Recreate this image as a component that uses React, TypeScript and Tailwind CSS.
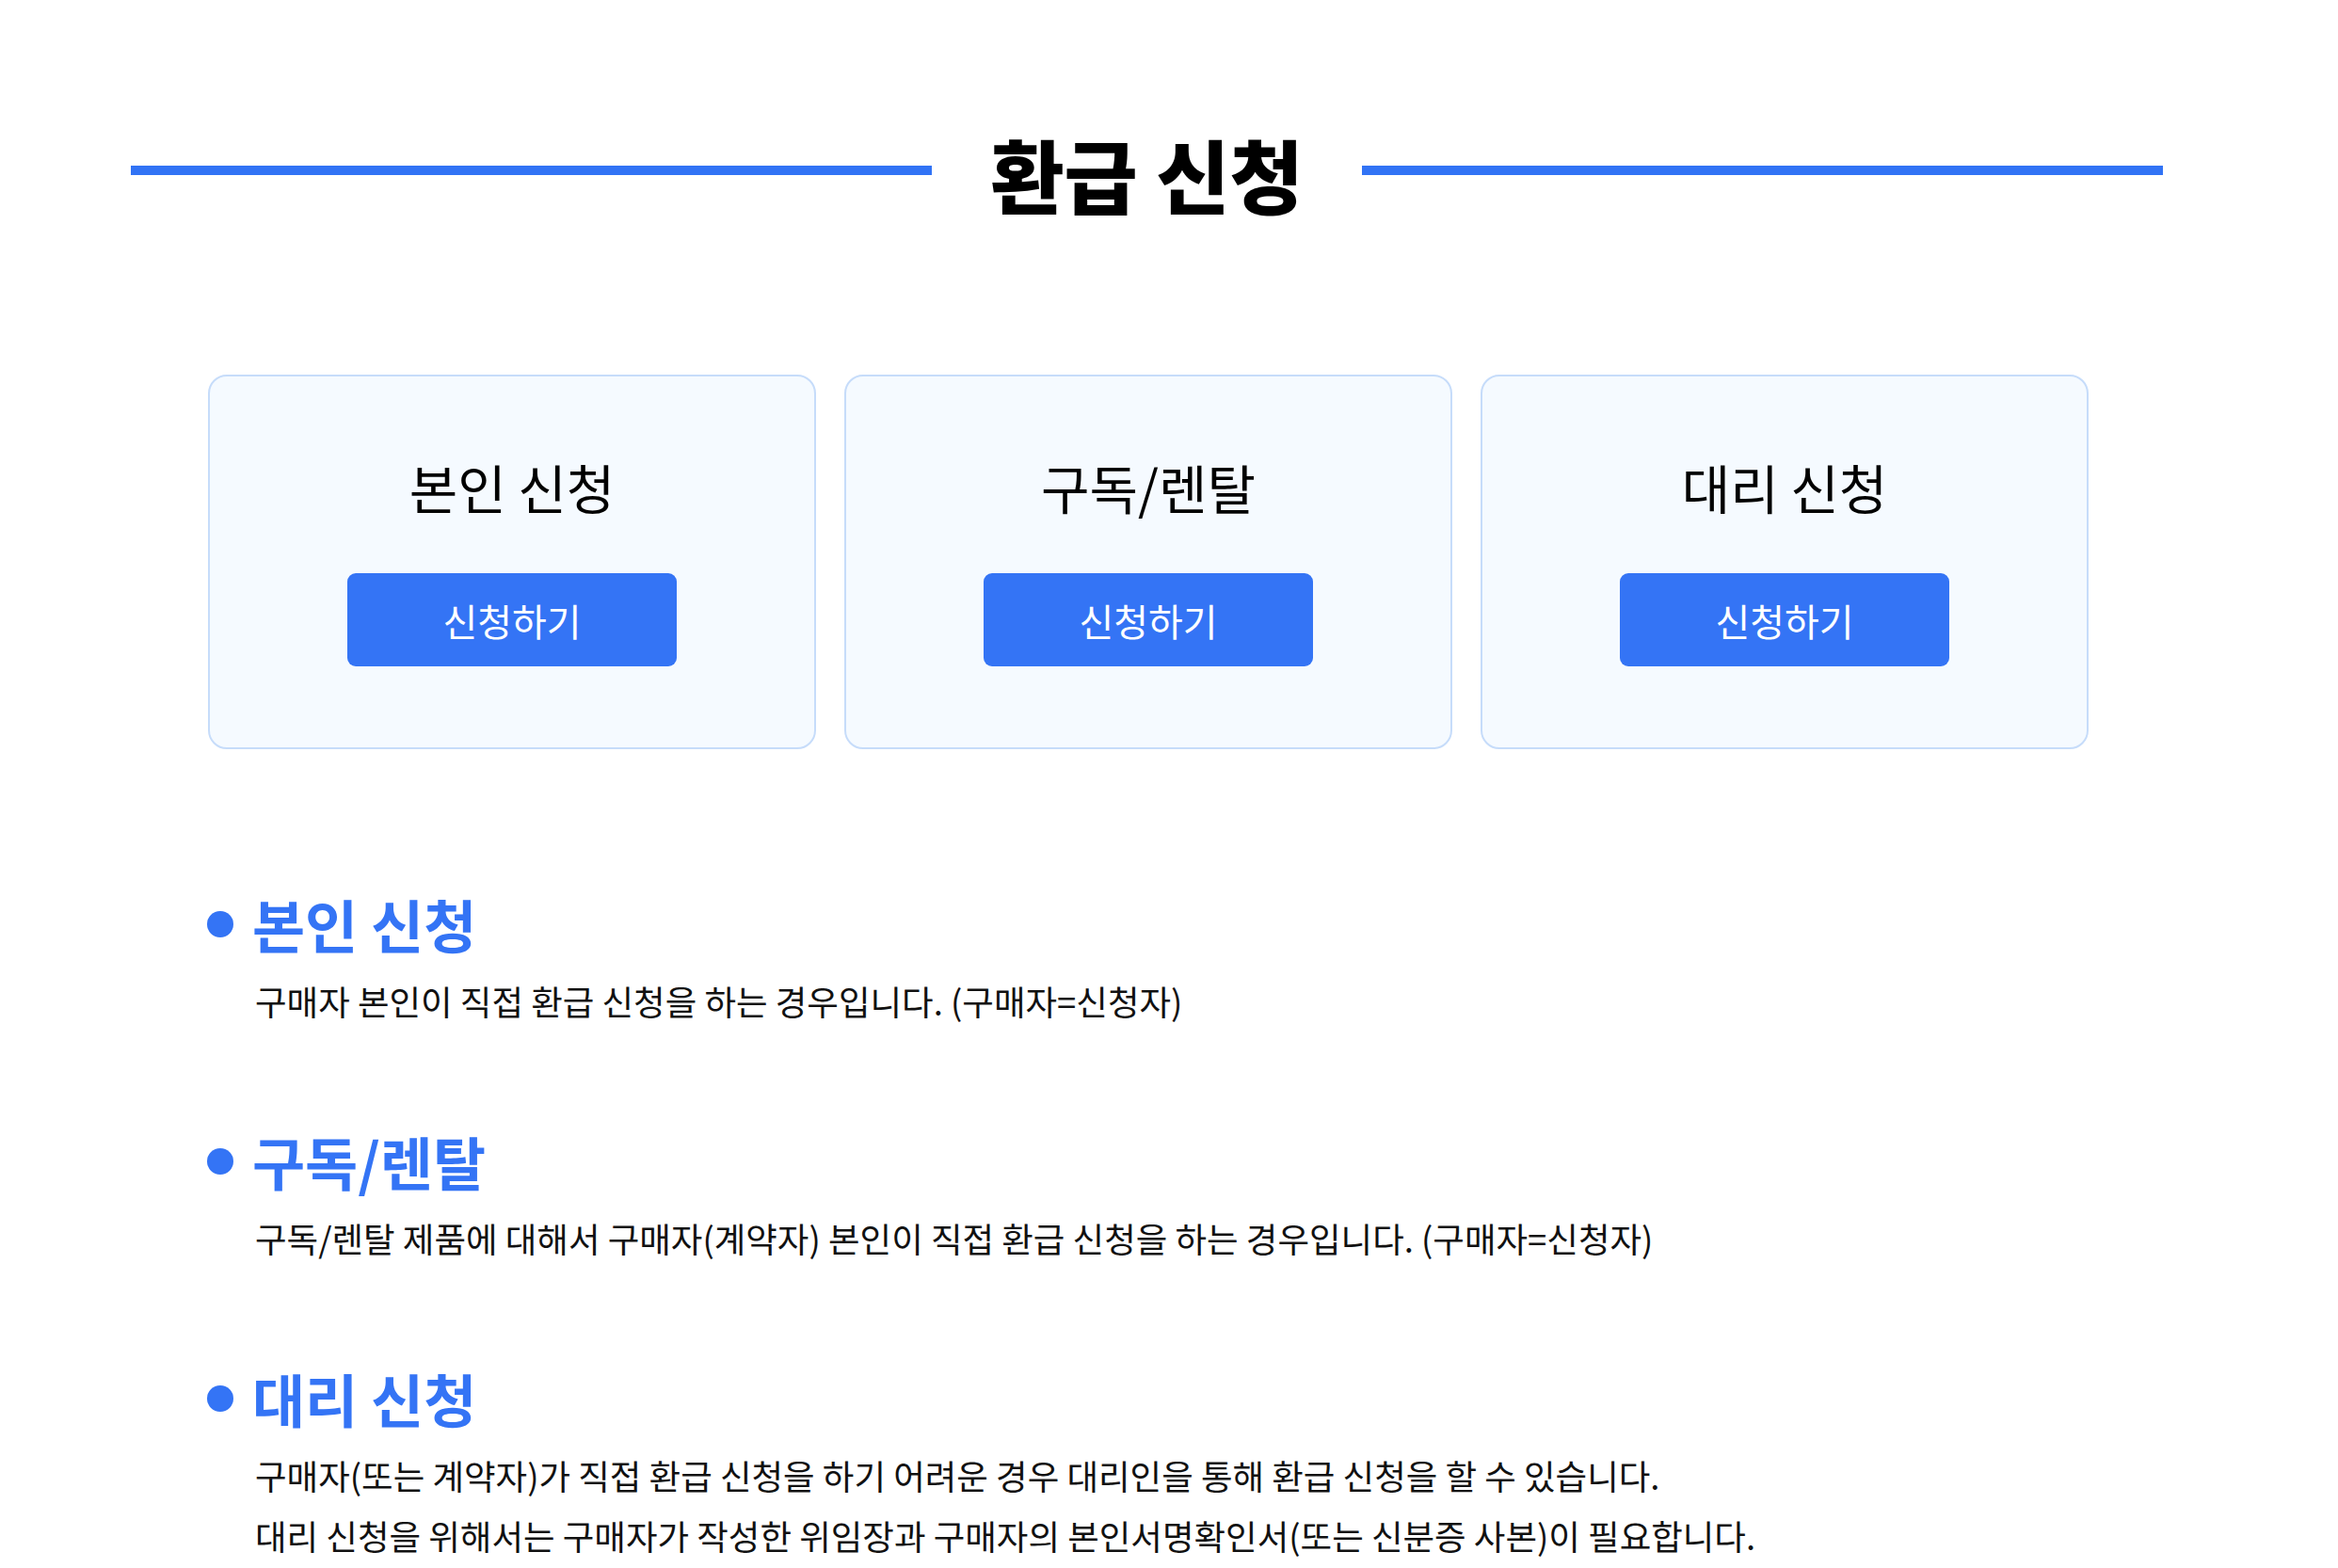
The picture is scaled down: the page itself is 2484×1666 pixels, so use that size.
import React from 'react';

const FONT = "font-['Noto_Sans_CJK_KR','Noto_Sans',sans-serif]";

const cards = [
  { title: '본인 신청' },
  { title: '구독/렌탈' },
  { title: '대리 신청' },
];

const sections = [
  {
    title: '본인 신청',
    lines: ['구매자 본인이 직접 환급 신청을 하는 경우입니다. (구매자=신청자)'],
  },
  {
    title: '구독/렌탈',
    lines: ['구독/렌탈 제품에 대해서 구매자(계약자) 본인이 직접 환급 신청을 하는 경우입니다. (구매자=신청자)'],
  },
  {
    title: '대리 신청',
    lines: [
      '구매자(또는 계약자)가 직접 환급 신청을 하기 어려운 경우 대리인을 통해 환급 신청을 할 수 있습니다.',
      '대리 신청을 위해서는 구매자가 작성한 위임장과 구매자의 본인서명확인서(또는 신분증 사본)이 필요합니다.',
    ],
  },
];

function ApplyCard({ title }: { title: string }) {
  return (
    <div className="h-[398px] rounded-[20px] border-2 border-[#c6dcfa] bg-[#f5faff] flex flex-col items-center pt-[89px]">
      <h3 className="text-[56px] leading-none font-normal text-black">{title}</h3>
      <button className="mt-[64px] w-[350px] h-[99px] rounded-[9px] bg-[#3474f5] text-white text-[40px] leading-none font-normal">
        신청하기
      </button>
    </div>
  );
}

export default function App() {
  return (
    <div className={`min-h-screen w-full bg-white ${FONT}`}>
      <div className="ml-[139px] w-[2159px] pt-[141px] pb-[20px]">
        {/* Title */}
        <div className="flex items-center">
          <div className="flex-1 h-[10px] mb-[6px] bg-[#3173f5]" />
          <h1 className="mx-[62px] text-[85px] leading-none font-black text-black">환급 신청</h1>
          <div className="flex-1 h-[10px] mb-[6px] bg-[#3173f5]" />
        </div>

        {/* Cards */}
        <div className="mt-[172px] ml-[82px] w-[1998px] grid grid-cols-3 gap-[30px]">
          {cards.map((c) => (
            <ApplyCard key={c.title} title={c.title} />
          ))}
        </div>

        {/* Descriptions */}
        <div className="mt-[155px] ml-[81px] flex flex-col gap-[107px]">
          {sections.map((s) => (
            <div key={s.title}>
              <div className="flex items-center gap-[20px]">
                <span className="w-[28px] h-[28px] rounded-full bg-[#3474f5]" />
                <h2 className="text-[61px] leading-none font-bold text-[#3474f5]">{s.title}</h2>
              </div>
              <div className="mt-[20px] ml-[51px]">
                {s.lines.map((l) => (
                  <p key={l} className="text-[36.5px] leading-[64px] text-[#111]">
                    {l}
                  </p>
                ))}
              </div>
            </div>
          ))}
        </div>
      </div>
    </div>
  );
}
